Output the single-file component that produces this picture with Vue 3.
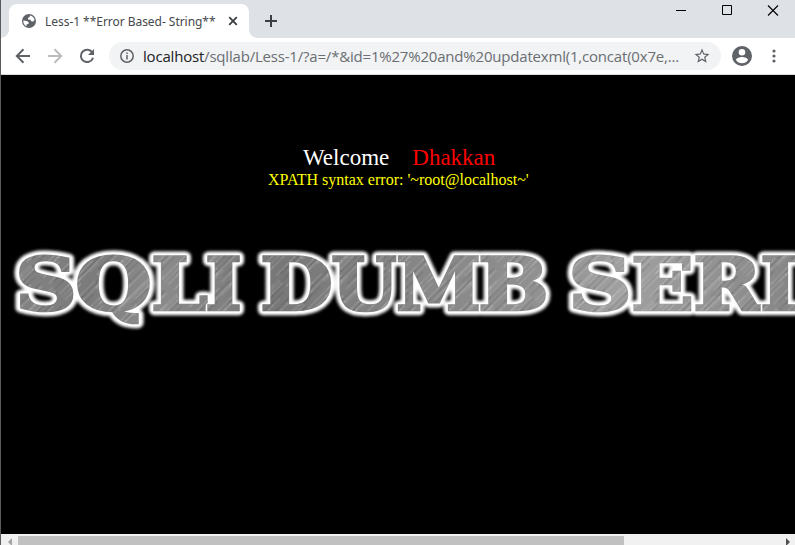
<script setup>
const letters = [
  { c: 'S', x: 15, w: 62 }, { c: 'Q', x: 75, w: 77 }, { c: 'L', x: 151, w: 57 }, { c: 'I', x: 205, w: 37 },
  { c: 'D', x: 260, w: 73 }, { c: 'U', x: 331, w: 68 }, { c: 'M', x: 396, w: 86 }, { c: 'B', x: 478, w: 71 },
  { c: 'S', x: 568, w: 64 }, { c: 'E', x: 631, w: 63 }, { c: 'R', x: 693, w: 69 }, { c: 'I', x: 760, w: 38 },
]
</script>

<template>
  <div class="window">
    <header class="tabs">
      <div class="tab">
        <svg class="globe" viewBox="0 0 16 16"><circle cx="8" cy="8" r="7" fill="#5f6368"/><path d="M2.4 7.6l3.5.4 2 1.5-.6 1.4-1.7.3v2.1C3.3 12.4 2 10.4 2.4 7.6zM9 2.5c2.4.4 4.1 2 4.6 4.6l-1.2 1.4-2.1-.3-1.1-1.5-2-.3-.4-1.5 1.8-.9z" fill="#fff"/></svg>
        <span class="title">Less-1 **Error Based- String**</span>
        <svg class="close" viewBox="0 0 10 10"><path d="M1.2 1.2l7.6 7.6M8.8 1.2L1.2 8.8" stroke="#3c4043" stroke-width="1.8"/></svg>
      </div>
      <svg class="plus" viewBox="0 0 12 12"><path d="M6 0v12M0 6h12" stroke="#3c4043" stroke-width="2"/></svg>
      <svg class="controls" viewBox="0 0 104 12"><path d="M0 5.5h10" stroke="#000"/><path d="M46.500 .5h9v9h-9z" fill="none" stroke="#000"/><path d="M92 0.500l10 10M102 .5l-10 10" stroke="#000" stroke-width="1.1"/></svg>
    </header>
    <nav class="toolbar">
      <svg class="nav" viewBox="0 0 16 16"><path d="M15 8H2M8.500 1.300L1.800 8l6.700 6.700" fill="none" stroke="#5f6368" stroke-width="2"/></svg>
      <svg class="nav" viewBox="0 0 16 16"><path d="M1 8h13M7.500 1.300L14.200 8l-6.700 6.700" fill="none" stroke="#babcbe" stroke-width="2"/></svg>
      <svg class="nav" viewBox="0 0 16 16"><path d="M13.400 4.700A6.200 6.200 0 1 0 14 9.700" fill="none" stroke="#5f6368" stroke-width="2"/><path d="M15 1v6H9z" fill="#5f6368"/></svg>
      <div class="address">
        <svg class="info" viewBox="0 0 16 16"><circle cx="8" cy="8" r="6.200" fill="none" stroke="#5f6368" stroke-width="1.500"/><path d="M8 7v4.500M8 4.400V6" stroke="#5f6368" stroke-width="1.500"/></svg>
        <span class="url"><b>localhost</b>/sqllab/Less-1/?a=/*&amp;id=1%27%20and%20updatexml(1,concat(0x7e,...</span>
        <svg class="star" viewBox="0 0 24 24"><path d="M22 9.240l-7.190-.62L12 2 9.190 8.630 2 9.240l5.460 4.730L5.820 21 12 17.270 18.180 21l-1.630-7.030L22 9.240zM12 15.400l-3.760 2.270 1-4.280-3.320-2.880 4.380-.38L12 6.100l1.710 4.040 4.380.38-3.320 2.880 1 4.280L12 15.400z" fill="#5f6368"/></svg>
      </div>
      <svg class="avatar" viewBox="2 2 20 20"><path d="M12 2a10 10 0 1 0 0 20 10 10 0 0 0 0-20zm0 3a3.300 3.300 0 1 1 0 6.600A3.300 3.300 0 0 1 12 5zm0 14.200a7.200 7.200 0 0 1-6-3.220c.03-1.990 4-3.080 6-3.080s5.970 1.090 6 3.080a7.200 7.200 0 0 1-6 3.220z" fill="#5f6368"/></svg>
      <svg class="dots" viewBox="0 0 4 14"><g fill="#5f6368"><circle cx="2" cy="2" r="1.600"/><circle cx="2" cy="7" r="1.600"/><circle cx="2" cy="12" r="1.600"/></g></svg>
    </nav>
    <main class="page">
      <h1>Welcome<span>Dhakkan</span></h1>
      <p class="error">XPATH syntax error: '~root@localhost~'</p>
      <svg class="banner" viewBox="0 235 795 105">
        <defs>
          <linearGradient id="shade" gradientUnits="userSpaceOnUse" x1="0" x2="795" y1="230" y2="330"><stop stop-color="#858585"/><stop offset=".12" stop-color="#7b7b7b"/><stop offset=".2" stop-color="#8c8c8c"/><stop offset=".35" stop-color="#777"/><stop offset=".5" stop-color="#858585"/><stop offset=".66" stop-color="#8f8f8f"/><stop offset=".78" stop-color="#a0a0a0"/><stop offset="1" stop-color="#858585"/></linearGradient>
          <pattern id="brushed" width="83" height="31" patternUnits="userSpaceOnUse" patternTransform="rotate(-45)"><g stroke-width=".6"><path d="M0 2h47M20 6h50M0 10h23M40 15h37M0 18h34M12 23h57M50 28h33" stroke="#fff" stroke-opacity=".3"/><path d="M30 4h48M0 8h37M45 12h32M5 20h42M0 26h24M44 30h39" stroke="#222" stroke-opacity=".28"/></g><path d="M0 7h50M30 24h53" stroke="#fff" stroke-opacity=".06" stroke-width="4"/></pattern>
          <filter id="glow" filterUnits="userSpaceOnUse" x="0" y="230" width="820" height="115"><feGaussianBlur stdDeviation="1.700"/></filter>
        </defs>
        <g class="glyphs halo" filter="url(#glow)"><text v-for="(l, i) in letters" :key="i" :x="l.x" y="309.500" :textLength="l.w" lengthAdjust="spacingAndGlyphs">{{ l.c }}</text></g>
        <g class="glyphs"><g v-for="(l, i) in letters" :key="i">
          <text v-for="layer in ['edge', 'metal', 'grain']" :key="layer" :class="layer" :x="l.x" y="309.500" :textLength="l.w" lengthAdjust="spacingAndGlyphs">{{ l.c }}</text>
        </g></g>
      </svg>
    </main>
    <footer class="scrollbar">
      <svg class="arrow" viewBox="0 0 17 11"><path d="M11 4v8L7 8z" fill="#a3a3a3"/></svg>
      <div class="thumb"></div>
      <svg class="arrow right" viewBox="0 0 17 11"><path d="M8 4v8l4-4z" fill="#505050"/></svg>
    </footer>
  </div>
</template>

<style>
body { margin: 0; overflow: hidden; }
</style>
<style scoped>
.window { box-sizing: border-box; width: 795px; height: 545px; border-left: 1px solid #5b5b5b; background: #000; display: flex; flex-direction: column; overflow: hidden; font-family: "Open Sans", sans-serif; }
svg { display: block; flex: none; }
.tabs { height: 38px; flex: none; background: #dee1e6; display: flex; align-items: flex-start; }
.tab { box-sizing: border-box; margin-left: 8px; margin-top: 4px; width: 240px; height: 34px; background: #fff; border-radius: 8px 8px 0 0; display: flex; align-items: center; padding: 0 11px 0 12px; position: relative; }
.tab::before, .tab::after { content: ""; position: absolute; bottom: 0; width: 8px; height: 8px; }
.tab::before { left: -8px; background: radial-gradient(circle at 0 0, #dee1e6 7.500px, #fff 8px); }
.tab::after { right: -8px; background: radial-gradient(circle at 100% 0, #dee1e6 7.500px, #fff 8px); }
.globe { width: 16px; height: 16px; }
.title { margin-left: 8px; padding-top: 2px; font: 12px/18px "Noto Sans", sans-serif; color: #45484c; white-space: nowrap; letter-spacing: -.04px; flex: 1; }
.close { width: 10px; height: 10px; }
.plus { width: 12px; height: 12px; margin: 15px 0 0 16px; }
.controls { width: 104px; height: 12px; margin: 5px 15px 0 auto; }
.toolbar { box-sizing: border-box; height: 37px; flex: none; background: #fff; border-bottom: 1px solid #dadce0; display: flex; align-items: center; padding-left: 14px; }
.nav { width: 16px; height: 16px; margin-right: 16px; }
.address { box-sizing: border-box; width: 612px; height: 28px; margin-left: -2px; margin-right: 11px; border-radius: 14px; background: #f1f3f4; display: flex; align-items: center; padding: 0 10px 0 10px; }
.info { width: 16px; height: 16px; }
.url { flex: 1; margin-left: 8px; font: 15px/24px "Open Sans", sans-serif; color: #6b6e73; white-space: nowrap; letter-spacing: -.195px; }
.url b { font-weight: 400; color: #202124; }
.star { width: 18px; height: 18px; }
.avatar { width: 20px; height: 20px; }
.dots { width: 4px; height: 14px; margin-left: 20px; }
.page { flex: 1; min-height: 0; background: #000; font-family: "Liberation Serif", serif; overflow: hidden; }
h1 { margin: 69px 0 0 302px; font-size: 23px; line-height: 28px; font-weight: 400; color: #fff; display: flex; gap: 23px; }
h1 span { color: #f00; }
.error { margin: -1px 0 0 267px; font-size: 16px; line-height: 18px; color: #ff0; white-space: nowrap; }
.banner { width: 795px; height: 105px; margin: 46px 0 0 -1px; }
.glyphs { font: 700 73px "DejaVu Serif", serif; stroke-linejoin: miter; }
.halo { fill: #fff; stroke: #fff; stroke-width: 10.500px; stroke-linejoin: round; }
.edge { fill: #fff; stroke: #fff; stroke-width: 5.500px; stroke-linejoin: round; }
.metal { fill: url(#shade); stroke: url(#shade); stroke-width: 2.600px; }
.grain { fill: url(#brushed); stroke: url(#brushed); stroke-width: 2.600px; }
.scrollbar { height: 11px; flex: none; background: #f1f1f1; display: flex; }
.arrow { width: 17px; height: 11px; }
.right { margin-left: auto; }
.thumb { width: 606px; height: 9px; margin-top: 2px; background: #c1c1c1; }
</style>
